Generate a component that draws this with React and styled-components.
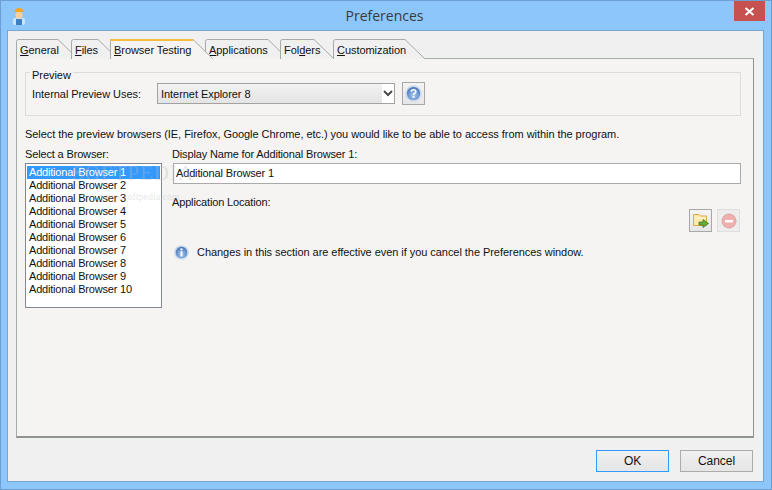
import React from 'react';
import styled, { createGlobalStyle } from 'styled-components';

const GlobalStyle = createGlobalStyle`
    html, body {
        margin: 0;
        padding: 0;
        background: #8cc6fb;
    }
    body {
        font-family: "Liberation Sans", Arial, sans-serif;
        font-size: 11px;
        color: #111;
        letter-spacing: -0.05px;
    }
`;

const Win = styled.div`
    box-sizing: border-box;
    width: 772px;
    height: 490px;
    background: #8cc6fb;
    border: 1px solid #6d9fd0;
    display: flex;
    flex-direction: column;
    overflow: hidden;
`;

const TitleBar = styled.div`
    height: 29px;
    flex: none;
    display: flex;
    align-items: flex-start;
    justify-content: space-between;
    padding: 0 6px 0 10px;
`;

const AppIcon = styled.div`
    width: 16px;
    height: 22px;
    margin-top: 6px;
`;

const Title = styled.div`
    font-family: "Open Sans", "Noto Sans", sans-serif;
    font-size: 14px;
    letter-spacing: 0;
    line-height: 30px;
    color: #3a3a3a;
    margin-left: 8px;
`;

const CloseButton = styled.div`
    width: 31px;
    height: 20px;
    background: #c75050;
    display: flex;
    align-items: center;
    justify-content: center;
`;

const Client = styled.div`
    flex: 1;
    margin: 0 7px 7px 6px;
    background: #f0f0f0;
    border: 1px solid #78a6d2;
    padding: 8px 9px 0 8px;
    display: flex;
    flex-direction: column;
`;

const TabRow = styled.div`
    height: 19px;
    flex: none;
    display: flex;
    position: relative;
    z-index: 1;
`;

const Tab = styled.div`
    position: relative;
    box-sizing: border-box;
    width: ${p => p.$width}px;
    margin-right: ${p => p.$overlap}px;
    padding: 4px 0 0 4px;
    height: 20px;
    line-height: 15px;
    white-space: nowrap;
    z-index: ${p => (p.$active ? 3 : 1)};
`;

const TabLabel = styled.span`
    position: relative;
`;

const TabShape = styled.svg`
    position: absolute;
    left: 0;
    top: 0;
`;

const Mnemonic = styled.u`
    text-underline-offset: 1px;
`;

const Panel = styled.div`
    box-sizing: border-box;
    height: 380px;
    flex: none;
    background: #f5f4f3;
    border: 1px solid #a5aba6;
    border-right-color: #8f9490;
    border-bottom: 2px solid #8f9490;
    padding: 13px 12px 0 8px;
    position: relative;
`;

const Group = styled.div`
    box-sizing: border-box;
    height: 44px;
    padding: 9px 6px 0 6px;
    border: 1px solid #dcdcdc;
    position: relative;
`;

const GroupLegend = styled.div`
    position: absolute;
    left: 4px;
    top: -4px;
    padding: 0 2px;
    line-height: 13px;
    background: #f5f4f3;
`;

const GroupRow = styled.div`
    display: flex;
    align-items: center;
    height: 23px;
`;

const PreviewLabel = styled.span`
    width: 125px;
    flex: none;
`;

const SelectBox = styled.div`
    box-sizing: border-box;
    width: 238px;
    height: 21px;
    border: 1px solid #a2a2a2;
    background: linear-gradient(#f2f2f2, #e4e4e4);
    display: flex;
    align-items: center;
    justify-content: space-between;
    padding-left: 3px;
`;

const SelectArrow = styled.div`
    width: 12px;
    height: 19px;
    background: #fff;
    display: flex;
    align-items: center;
    justify-content: center;
`;

const IconButton = styled.div`
    box-sizing: border-box;
    width: 23px;
    height: 23px;
    flex: none;
    border: 1px solid ${p => (p.$disabled ? '#dedede' : '#a8a8a8')};
    background: ${p => (p.$disabled ? '#ededed' : 'linear-gradient(#f4f4f4, #e6e6e6)')};
    display: flex;
    align-items: center;
    justify-content: center;
    margin-left: ${p => p.$gap || 0}px;
`;

const Intro = styled.div`
    height: 15px;
    line-height: 15px;
    margin-top: 11px;
    white-space: nowrap;
`;

const Columns = styled.div`
    display: flex;
    margin-top: 5px;
    gap: 10px;
    position: relative;
`;

const LeftColumn = styled.div`
    width: 137px;
    flex: none;
`;

const RightColumn = styled.div`
    flex: 1;
    min-width: 0;
`;

const FieldLabel = styled.div`
    line-height: 15px;
    height: 15px;
    letter-spacing: -0.15px;
    margin-top: ${p => p.$gap || 0}px;
`;

const ListBox = styled.div`
    box-sizing: border-box;
    width: 137px;
    height: 145px;
    margin-top: 1px;
    padding: 2px 1px;
    background: #fff;
    border: 1px solid #828790;
`;

const ListRow = styled.div`
    height: 13px;
    line-height: 13px;
    padding-left: 2px;
    letter-spacing: -0.2px;
    white-space: nowrap;
    color: ${p => (p.$selected ? '#fff' : '#111')};
    background: ${p => (p.$selected ? '#3399ff' : 'transparent')};
`;

const Watermark = styled.div`
    position: absolute;
    left: ${p => p.$left}px;
    top: ${p => p.$top}px;
    font-family: "Liberation Serif", serif;
    font-size: ${p => p.$size}px;
    letter-spacing: ${p => p.$spacing}px;
    color: rgba(185, 185, 185, 0.35);
    white-space: nowrap;
    pointer-events: none;
`;

const TextInput = styled.div`
    box-sizing: border-box;
    width: 568px;
    height: 21px;
    margin: 1px 0 0 1px;
    padding-left: 2px;
    line-height: 19px;
    letter-spacing: -0.15px;
    background: #fff;
    border: 1px solid #a9a9a9;
`;

const ToolRow = styled.div`
    display: flex;
    justify-content: flex-end;
    height: 23px;
    margin-top: -1px;
    padding-right: 1px;
`;

const Notice = styled.div`
    display: flex;
    align-items: center;
    gap: 8px;
    height: 16px;
    margin: 12px 0 0 2px;
`;

const Footer = styled.div`
    display: flex;
    justify-content: flex-end;
    gap: 11px;
    padding: 12px 1px 0 0;
`;

const DialogButton = styled.div`
    box-sizing: border-box;
    width: 73px;
    height: 22px;
    line-height: 20px;
    text-align: center;
    font-size: 12px;
    background: linear-gradient(#f0f0f0, #e5e5e5);
    border: 1px solid ${p => (p.$primary ? '#3399ff' : '#acacac')};
`;

const tabs = [
    { key: 'general', width: 62, overlap: -7, parts: ['', 'G', 'eneral'] },
    { key: 'files', width: 47, overlap: -8, parts: ['', 'F', 'iles'] },
    { key: 'browser', width: 103, overlap: -8, parts: ['', 'B', 'rowser Testing'], active: true },
    { key: 'apps', width: 83, overlap: -8, parts: ['', 'A', 'pplications'] },
    { key: 'folders', width: 54, overlap: -1, parts: ['Fol', 'd', 'ers'] },
    { key: 'custom', width: 92, overlap: 0, parts: ['', 'C', 'ustomization'] },
];

const browsers = Array.from({ length: 10 }, (_, i) => `Additional Browser ${i + 1}`);

const TabOutline = ({ width, active }) => {
    const slantStart = width - 20;
    const shape = `M0.5 20 V2.5 Q0.5 0.5 2.5 0.5 H${slantStart} L${width - 0.5} 19.5`;
    return (
        <TabShape width={width} height={20}>
            <path d={`${shape} V20 Z`} fill={active ? '#f5f4f3' : '#f0f0f0'} stroke="none" />
            <path d={shape} fill="none" stroke="#a5aba6" />
            {active && <rect x="0" y="0" width={slantStart} height="2" fill="#f6bd3c" />}
        </TabShape>
    );
};

const WorkerIcon = () => (
    <svg width="16" height="18" viewBox="0 0 16 18">
        <rect x="2" y="11" width="12" height="7" rx="2" fill="#cfe3f5" />
        <rect x="5" y="12" width="6" height="6" fill="#3b7fc4" />
        <circle cx="8" cy="8" r="3.5" fill="#f7cf9f" />
        <path d="M3.5 5 Q4 1 8 1 Q12 1 12.5 5 Z" fill="#f5a623" />
    </svg>
);

const CloseIcon = () => (
    <svg width="11" height="9" viewBox="0 0 11 9">
        <path d="M1.5 1 L9.5 8 M9.5 1 L1.5 8" stroke="#fff" strokeWidth="2" />
    </svg>
);

const ChevronIcon = () => (
    <svg width="10" height="7" viewBox="0 0 10 7">
        <path d="M1 1 L5 5 L9 1" fill="none" stroke="#4a4a4a" strokeWidth="2" />
    </svg>
);

const Orb = ({ id, size, children }) => (
    <svg width={size} height={size} viewBox="0 0 16 16">
        <defs>
            <radialGradient id={id} cx="50%" cy="65%" r="60%">
                <stop offset="0" stopColor="#a9c8ec" />
                <stop offset="0.65" stopColor="#6b97cf" />
                <stop offset="1" stopColor="#4a78b4" />
            </radialGradient>
        </defs>
        <circle cx="8" cy="8" r="7.8" fill="#c8daee" />
        <circle cx="8" cy="8" r="6.2" fill={`url(#${id})`} />
        {children}
    </svg>
);

const FolderIcon = () => (
    <svg width="16" height="16" viewBox="0 0 16 16">
        <path d="M0.5 1.5 H6 L7.5 3 H13.5 V12.5 H0.5 Z" fill="#fde9a8" stroke="#e0a94a" />
        <path d="M2 5 H13" stroke="#fff6d8" />
        <path d="M6 9 H10 V6.5 L15.5 10.5 L10 14.5 V12 H6 Z" fill="#69a83a" stroke="#447a22" strokeWidth="0.8" />
    </svg>
);

const RemoveIcon = () => (
    <svg width="16" height="16" viewBox="0 0 16 16">
        <circle cx="8" cy="8" r="7" fill="#eeb0ae" stroke="#e3a3a1" />
        <rect x="4" y="7" width="8" height="2.4" fill="#fff" />
    </svg>
);

const App = () => (
    <>
        <GlobalStyle />
        <Win>
            <TitleBar>
                <AppIcon>
                    <WorkerIcon />
                </AppIcon>
                <Title>Preferences</Title>
                <CloseButton>
                    <CloseIcon />
                </CloseButton>
            </TitleBar>
            <Client>
                <TabRow>
                    {tabs.map(({ key, width, overlap, parts, active }) => (
                        <Tab key={key} $width={width} $overlap={overlap} $active={active}>
                            <TabOutline width={width} active={active} />
                            <TabLabel>
                                {parts[0]}
                                <Mnemonic>{parts[1]}</Mnemonic>
                                {parts[2]}
                            </TabLabel>
                        </Tab>
                    ))}
                </TabRow>
                <Panel>
                    <Group>
                        <GroupLegend>Preview</GroupLegend>
                        <GroupRow>
                            <PreviewLabel>Internal Preview Uses:</PreviewLabel>
                            <SelectBox>
                                Internet Explorer 8
                                <SelectArrow>
                                    <ChevronIcon />
                                </SelectArrow>
                            </SelectBox>
                            <IconButton $gap={7}>
                                <Orb id="helpOrb" size={17}>
                                    <path d="M5.8 6.3 Q6 4.4 8 4.4 Q10.2 4.4 10.2 6.2 Q10.2 7.3 8.9 8 Q8 8.5 8 9.5" fill="none" stroke="#fff" strokeWidth="1.5" />
                                    <rect x="7.2" y="10.4" width="1.7" height="1.7" fill="#fff" />
                                </Orb>
                            </IconButton>
                        </GroupRow>
                    </Group>
                    <Intro>Select the preview browsers (IE, Firefox, Google Chrome, etc.) you would like to be able to access from within the program.</Intro>
                    <Columns>
                        <LeftColumn>
                            <FieldLabel>Select a Browser:</FieldLabel>
                            <ListBox>
                                {browsers.map((name, i) => (
                                    <ListRow key={name} $selected={i === 0}>{name}</ListRow>
                                ))}
                            </ListBox>
                        </LeftColumn>
                        <RightColumn>
                            <FieldLabel>Display Name for Additional Browser 1:</FieldLabel>
                            <TextInput>Additional Browser 1</TextInput>
                            <FieldLabel $gap={11}>Application Location:</FieldLabel>
                            <ToolRow>
                                <IconButton>
                                    <FolderIcon />
                                </IconButton>
                                <IconButton $disabled $gap={5}>
                                    <RemoveIcon />
                                </IconButton>
                            </ToolRow>
                            <Notice>
                                <Orb id="infoOrb" size={15}>
                                    <rect x="7" y="3.6" width="2" height="2" fill="#fff" />
                                    <rect x="7" y="6.6" width="2" height="5.6" fill="#fff" />
                                </Orb>
                                Changes in this section are effective even if you cancel the Preferences window.
                            </Notice>
                        </RightColumn>
                        <Watermark $left={47} $top={14} $size={21} $spacing={1}>SOFTPEDIA</Watermark>
                        <Watermark $left={75} $top={44} $size={10} $spacing={0}>www.softpedia.com</Watermark>
                    </Columns>
                </Panel>
                <Footer>
                    <DialogButton $primary>OK</DialogButton>
                    <DialogButton>Cancel</DialogButton>
                </Footer>
            </Client>
        </Win>
    </>
);

export default App;
